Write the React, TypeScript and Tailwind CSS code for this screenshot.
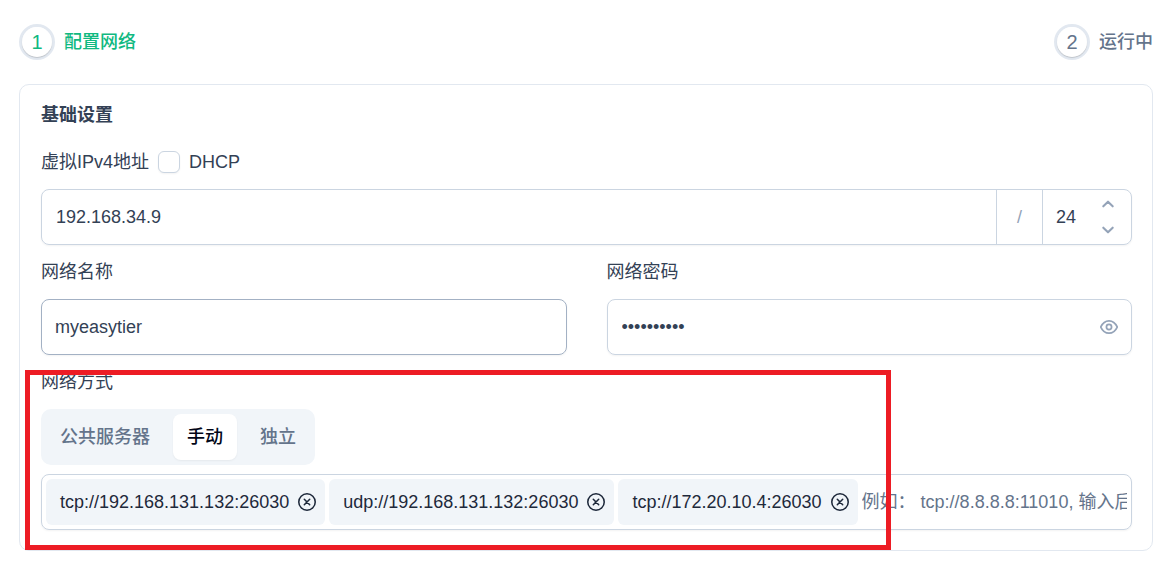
import { useState } from 'react'
import type { ReactNode } from 'react'

const initialPeers = [
  'tcp://192.168.131.132:26030',
  'udp://192.168.131.132:26030',
  'tcp://172.20.10.4:26030',
]

const modes = ['公共服务器', '手动', '独立']

function EyeIcon() {
  return (
    <svg viewBox="0 0 14 14" className="size-[18px]" fill="none" stroke="currentColor" strokeWidth="1.35">
      <path
        strokeLinejoin="round"
        d="M.6 7C1.1 5.9 3.1 2.2 7 2.2S12.9 5.9 13.4 7C12.9 8.1 10.9 11.8 7 11.8S1.1 8.1.6 7Z"
      />
      <circle cx="7" cy="7" r="2" />
    </svg>
  )
}

function TimesCircleIcon() {
  return (
    <svg viewBox="0 0 14 14" className="size-[18px]" fill="none" stroke="currentColor" strokeWidth="1.2">
      <circle cx="7" cy="7" r="6.4" />
      <path strokeLinecap="round" d="M4.9 4.9l4.2 4.2M9.1 4.9L4.9 9.1" />
    </svg>
  )
}

function Chevron({ up = false }: { up?: boolean }) {
  return (
    <svg
      viewBox="0 0 14 14"
      className="size-[14px]"
      fill="none"
      stroke="currentColor"
      strokeWidth="2.1"
      strokeLinecap="round"
      strokeLinejoin="round"
    >
      <path d={up ? 'M2.3 9.3L7 4.7l4.7 4.6' : 'M2.3 4.7L7 9.3l4.7-4.6'} />
    </svg>
  )
}

function Step({ number, title, active = false }: { number: number; title: string; active?: boolean }) {
  return (
    <button
      type="button"
      className={`flex items-center gap-[9px] ${active ? 'text-[#10b981]' : 'text-[#64748b]'}`}
    >
      <span className="size-9 rounded-full border-3 border-[#e2e8f0] text-[20px] leading-7">
        <span className="flex size-full items-center justify-center rounded-full bg-white shadow-[0_1px_1px_rgba(0,0,0,0.16)]">
          {number}
        </span>
      </span>
      <span className="font-medium">{title}</span>
    </button>
  )
}

function Field({ id, label, children }: { id: string; label: string; children: ReactNode }) {
  return (
    <div className="flex min-w-0 flex-1 flex-col gap-[13px]">
      <label htmlFor={id}>{label}</label>
      {children}
    </div>
  )
}

export default function App() {
  const [dhcp, setDhcp] = useState(false)
  const [prefix, setPrefix] = useState(24)
  const [mode, setMode] = useState('手动')
  const [showPassword, setShowPassword] = useState(false)
  const [peers, setPeers] = useState(initialPeers)

  return (
    <div
      lang="zh-CN"
      className="bg-white pt-6 pr-2 pb-3 pl-[19px] font-['Liberation_Sans','Noto_Sans_CJK_SC',sans-serif] text-[18px] leading-7 text-[#334155]"
    >
      <nav className="flex items-center justify-between">
        <Step number={1} title="配置网络" active />
        <Step number={2} title="运行中" />
      </nav>

      <main className="mt-6 rounded-[10px] border border-[#e2e8f0] pt-4 pr-5 pb-5 pl-[21px]">
        <h2 className="font-bold">基础设置</h2>

        <div className="mt-[19px] flex items-center gap-[9px]">
          <label htmlFor="virtual-ip">虚拟IPv4地址</label>
          <input
            id="dhcp"
            type="checkbox"
            checked={dhcp}
            onChange={(e) => setDhcp(e.target.checked)}
            className="size-[22px] appearance-none rounded-md border border-[#cbd5e1] bg-white shadow-xs checked:bg-[#10b981]"
          />
          <label htmlFor="dhcp">DHCP</label>
        </div>

        <div className="mt-[13px] flex h-14 rounded-lg border border-[#cbd5e1] shadow-xs">
          <input
            id="virtual-ip"
            type="text"
            defaultValue="192.168.34.9"
            className="min-w-0 flex-1 rounded-l-lg px-[14px] outline-none"
          />
          <span className="flex w-[46px] items-center justify-center border-l border-[#cbd5e1] text-[#94a3b8]">/</span>
          <div className="flex w-[89px] border-l border-[#cbd5e1]">
            <input
              type="text"
              inputMode="numeric"
              aria-label="网络前缀长度"
              value={prefix}
              onChange={(e) => setPrefix(Number(e.target.value) || 0)}
              className="min-w-0 flex-1 pl-[13px] outline-none"
            />
            <div className="flex w-[47px] flex-col py-px text-[#94a3b8]">
              <button
                type="button"
                aria-label="增加"
                onClick={() => setPrefix(prefix + 1)}
                className="flex flex-1 items-center justify-center"
              >
                <Chevron up />
              </button>
              <button
                type="button"
                aria-label="减少"
                onClick={() => setPrefix(prefix - 1)}
                className="flex flex-1 items-center justify-center"
              >
                <Chevron />
              </button>
            </div>
          </div>
        </div>

        <div className="mt-[13px] flex gap-10">
          <Field id="network-name" label="网络名称">
            <input
              id="network-name"
              type="text"
              defaultValue="myeasytier"
              className="h-14 w-full rounded-lg border border-[#a3b1c4] px-[13px] shadow-xs outline-none"
            />
          </Field>
          <Field id="network-secret" label="网络密码">
            <div className="flex h-14 items-center rounded-lg border border-[#cbd5e1] pr-[13px] shadow-xs">
              <input
                id="network-secret"
                type={showPassword ? 'text' : 'password'}
                defaultValue="myeasytier"
                className="h-full min-w-0 flex-1 rounded-lg pl-[14px] outline-none"
              />
              <button
                type="button"
                aria-label="显示密码"
                onClick={() => setShowPassword(!showPassword)}
                className="text-[#94a3b8]"
              >
                <EyeIcon />
              </button>
            </div>
          </Field>
        </div>

        <section className="relative mt-[13px]">
          <div>
            <label htmlFor="peers">网络方式</label>
          </div>
          <div className="mt-[13px] inline-flex h-14 gap-[9px] rounded-[10px] bg-[#f1f5f9] p-[5px] align-top font-medium">
            {modes.map((item) => (
              <button
                key={item}
                type="button"
                aria-pressed={item === mode}
                onClick={() => setMode(item)}
                className={`rounded-lg px-[14px] ${
                  item === mode ? 'bg-white text-[#020617] shadow-xs' : 'text-[#64748b]'
                }`}
              >
                {item}
              </button>
            ))}
          </div>
          <div className="mt-[9px] flex h-14 gap-1 rounded-lg border border-[#cbd5e1] p-1 shadow-xs">
            {peers.map((peer) => (
              <span
                key={peer}
                className="flex shrink-0 items-center gap-[9px] rounded-md bg-[#f1f5f9] pr-[9px] pl-[14px] text-[#1e293b]"
              >
                {peer}
                <button
                  type="button"
                  aria-label="移除"
                  onClick={() => setPeers(peers.filter((p) => p !== peer))}
                >
                  <TimesCircleIcon />
                </button>
              </span>
            ))}
            <input
              id="peers"
              type="text"
              placeholder="例如： tcp://8.8.8.8:11010, 输入后"
              className="min-w-0 flex-1 outline-none placeholder:text-[#64748b]"
            />
          </div>

          {/* highlight frame around the network mode settings */}
          <div className="pointer-events-none absolute top-[2px] right-[241px] -bottom-5 -left-4 border-5 border-[#ed1c24]" />
        </section>
      </main>
    </div>
  )
}
